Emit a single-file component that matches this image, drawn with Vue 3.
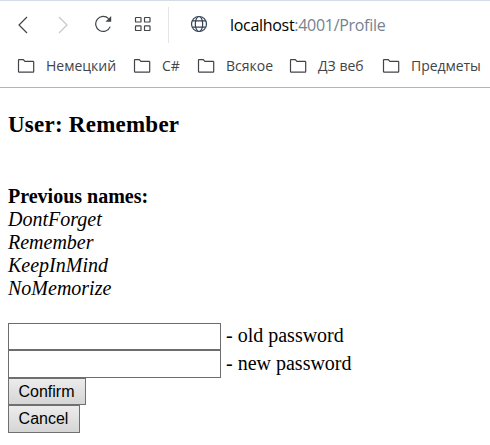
<script setup>
const bookmarks = [
  { name: 'Немецкий', kind: 'german' },
  { name: 'C#', kind: 'csharp' },
  { name: 'Всякое', kind: 'misc' },
  { name: 'ДЗ веб', kind: 'web' },
  { name: 'Предметы', kind: 'subjects' },
]
const names = ['DontForget', 'Remember', 'KeepInMind', 'NoMemorize']
</script>

<template>
  <div class="window">
    <header class="browser">
      <div class="toolbar">
        <svg class="back" width="10" height="18" viewBox="0 0 10 18"><path d="M9 1 1 9l8 8" /></svg>
        <svg class="forward" width="10" height="18" viewBox="0 0 10 18"><path d="M1 1l8 8-8 8" /></svg>
        <svg class="reload" width="18" height="18" viewBox="0 0 18 18">
          <path d="M15.2 11.6A7.5 7.5 0 1 1 13.6 3.7" /><path class="tip" d="M16.2 1v5.7h-5.7z" />
        </svg>
        <svg class="tiles" width="18" height="16" viewBox="0 0 18 16">
          <rect x="1.5" y="1.5" width="5.5" height="4.5" rx=".6" /><rect x="10.5" y="1.5" width="5.5" height="4.5" rx=".6" />
          <rect x="1.5" y="9.8" width="5.5" height="4.7" rx=".6" /><rect x="10.5" y="9.8" width="5.5" height="4.7" rx=".6" />
        </svg>
        <span class="divider"></span>
        <svg class="globe" width="18" height="18" viewBox="0 0 18 18">
          <circle cx="9" cy="9" r="7.5" /><ellipse cx="9" cy="9" rx="3.7" ry="7.5" /><path d="M2.3 5.8h13.4M2.3 12.2h13.4" />
        </svg>
        <span class="url"><b>localhost</b>:4001/Profile</span>
      </div>
      <nav class="bookmarks">
        <span v-for="b in bookmarks" :key="b.name" class="bookmark" :class="b.kind">
          <svg width="18" height="14" viewBox="0 0 18 14"><path d="M1.5 1.1Q1.5 .6 2 .6h4.3l1.6 1.7h8.2q.6 0 .6.6v9.7q0 .6-.6.6H2.1q-.6 0-.6-.6z" /></svg>
          <span class="label">{{ b.name }}</span>
        </span>
      </nav>
    </header>
    <main>
      <h2>User: Remember</h2>
      <section>
        <strong>Previous names:</strong>
        <em v-for="n in names" :key="n">{{ n }}</em>
      </section>
      <form @submit.prevent>
        <label><input type="password" /><span>- old password</span></label>
        <label><input type="password" /><span>- new password</span></label>
        <button class="confirm">Confirm</button>
        <button class="cancel">Cancel</button>
      </form>
    </main>
  </div>
</template>

<style>
body { background: #fff; overflow: hidden; }
</style>
<style scoped>
.window { width: 490px; height: 445px; overflow: hidden; background: #fff; color: #000; }
.browser { box-sizing: border-box; height: 88px; border-top: 1px solid #d4dce6; border-bottom: 1px solid #acb7c3; font-family: "Open Sans", sans-serif; }
svg { flex: none; fill: none; stroke: #414448; stroke-width: 1.2; }
.toolbar { display: flex; align-items: center; height: 47px; padding-left: 18px; }
.forward { margin-left: 30px; stroke: #c5c8cb; }
.reload { margin-left: 27px; margin-top: -1px; }
.tiles { margin-left: 21px; margin-top: -2px; }
.divider { width: 1px; height: 36px; margin-left: 16px; background: #e3e6e9; }
.globe { margin-left: 21px; margin-top: -2px; stroke: #354254; stroke-width: 1.2; }
.url { margin-left: 22px; font-size: 16px; line-height: 24px; letter-spacing: -.3px; color: #758390; white-space: nowrap; padding-top: 1px; }
.tip { fill: #414448; stroke: none; }
.url b { font-weight: 400; color: #000; }
.bookmarks { display: flex; height: 34px; padding-left: 17px; }
.bookmark { display: flex; align-items: center; gap: 11px; height: 35px; box-sizing: border-box; flex: none; font-size: 14px; color: #414448; }
.label { white-space: nowrap; line-height: 20px; padding-top: 1px; }
.german { width: 116px; }
.csharp { width: 64px; }
.misc { width: 92px; }
.web { width: 93px; }
.subjects .label { letter-spacing: -.05px; }
main { padding: 23px 8px 0; font: 20px/23px "Liberation Serif", serif; }
h2 { margin: 0; font-size: 23px; line-height: 27px; letter-spacing: .24px; }
section { display: flex; flex-direction: column; align-items: flex-start; margin-top: 47px; }
form { display: flex; flex-direction: column; align-items: flex-start; margin-top: 23px; }
label { display: flex; align-items: center; gap: 5px; height: 27px; white-space: nowrap; }
label + label { height: 28px; }
label span { padding-bottom: 2px; }
input { box-sizing: border-box; width: 213px; height: 100%; margin: 0; border: 1px solid #6d6d6d; border-radius: 0; background: #fff; }
button { box-sizing: border-box; margin: 0; padding: 0 1px 0 0; border: 1px solid #707070; border-radius: 0; background: linear-gradient(#ececec, #d5d5d5); color: #000; font: 16px/22px "Liberation Sans", sans-serif; }
.confirm { width: 78px; height: 27px; }
.cancel { width: 72px; height: 28px; }
</style>
